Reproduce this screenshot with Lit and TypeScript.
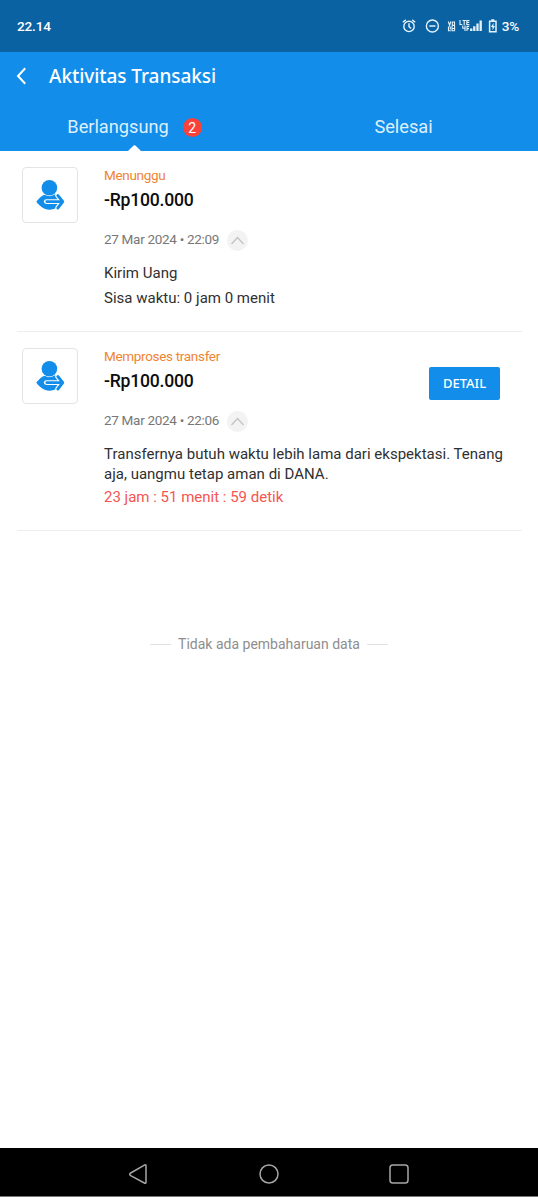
import { LitElement, html, css, svg, nothing } from "lit";
import { customElement, property } from "lit/decorators.js";

@customElement("status-bar")
class StatusBar extends LitElement {
  static styles = css`
    :host { display: flex; height: 52px; background: #0b62a3; color: #fff; position: relative;
      font: 500 13.6px/53px Roboto, sans-serif; padding: 0 19px 0 17px; justify-content: space-between; }
    .time { letter-spacing: -0.2px; }
    .right { display: flex; align-items: center; }
    svg { display: block; }
    .level { margin-left: 3px; letter-spacing: -0.3px; }
  `;
  render() {
    return html`
      <span class="time">22.14</span>
      <div class="right">
        <svg width="97" height="20" viewBox="402 16 97 20" fill="none" stroke="#e4f2fb" stroke-width="1.4">
          <circle cx="409" cy="26.4" r="5.2" />
          <path d="M409 23.2v3.5l2.2 1.7M402.8 22.3l3-2.4M415.2 22.3l-3-2.4" />
          <circle cx="432.4" cy="26" r="6" />
          <path d="M429.3 26h6.2" stroke-width="1.5" />
          <g stroke-width="1.1">
            <path d="M448.3 21.5l1.3 4 1.2-4M452.3 22h2.2v3.4h-2.2zM448.5 26.5v4.3h2.3M452 26v4.8h2.8M452 28.5h2.4M450.3 26.5v3M454.6 26v4.8" />
            <path d="M460 20v4.5h2.2M462.5 20.5h3.4M464.2 20.5v4.5M469.4 20.5h-2.6v4h2.6M466.8 22.4h2.4M462.8 25.5v2.7h2.2M465 25.5v5.500M467 31v-4.600h2.200M467 28.600h2" />
          </g>
          <path d="M471.200 31v-2.600M474.300 31v-4.800M477.500 31v-7.400M480.700 31v-10.400" stroke-width="2.300" />
          <path d="M489.600 21.300h6.400v10.500h-6.400zM491.300 19.900h3" stroke-width="1.500" />
          <path d="M493.700 22.800l-2.800 4.100h1.600v3.400l2.500-4.200h-1.600z" fill="#e4f2fb" stroke="none" />
        </svg>
        <span class="level">3%</span>
      </div>`;
  }
}

@customElement("app-header")
class AppHeader extends LitElement {
  static styles = css`
    :host { display: block; height: 99px; background: #128dea; color: #fff; overflow: hidden; }
    .bar { display: flex; align-items: center; height: 48px; padding-left: 16px; }
    .title { margin-left: 22px; font: 500 19px/48px "Noto Sans", "Open Sans", sans-serif; letter-spacing: -0.06px; }
    .tabs { display: grid; grid-template-columns: 1fr 1fr; grid-template-rows: 51px; height: 51px; font: 400 18.2px/54px Roboto, sans-serif; }
    .tab { display: flex; justify-content: center; align-items: flex-start; position: relative; color: #dff0fd; }
    .badge { width: 19px; height: 19px; border-radius: 50%; background: #f8423a; color: #fff; text-align: center;
      font-size: 14px; line-height: 20px; margin: 18px 0 0 14px; }
    .notch { position: absolute; left: 128px; bottom: 0; display: block; }
  `;
  render() {
    return html`
      <div class="bar">
        <svg width="11" height="18" viewBox="0 0 11 18" fill="none" stroke="#fff" stroke-width="2"><path d="M9.2 1.2L2 9l7.2 7.8" /></svg>
        <span class="title">Aktivitas Transaksi</span>
      </div>
      <div class="tabs">
        <div class="tab"><span>Berlangsung</span><span class="badge">2</span>
          <svg class="notch" width="13" height="6" viewBox="0 0 13 6"><path d="M0 6L5.6.6q.9-.8 1.8 0L13 6z" fill="#fff" /></svg>
        </div>
        <div class="tab">Selesai</div>
      </div>`;
  }
}

interface Transaction {
  status: string;
  amount: string;
  date: string;
  notes: string[];
  countdown?: string;
  action?: string;
}

@customElement("transaction-item")
class TransactionItem extends LitElement {
  @property({ attribute: false }) item!: Transaction;

  static styles = css`
    :host { display: flex; margin: 0 16px 0 17px; padding: 16px 0 0 5px; border-bottom: 1px solid #ededed;
      font-family: Roboto, sans-serif; color: #303030; }
    .icon { box-sizing: border-box; width: 56px; height: 56px; border: 1px solid #e4e4e4; border-radius: 4px; flex: none; }
    .icon svg { display: block; }
    .body { margin-left: 26px; flex: 1; min-width: 0; }
    .top { display: flex; justify-content: space-between; }
    .status { font-size: 13.5px; line-height: 17px; color: #f08432; letter-spacing: -0.32px; }
    .amount { font-size: 17.6px; line-height: 24px; margin-top: 4px; font-weight: 500; color: #0c0c0c; letter-spacing: -0.22px; }
    .meta { display: flex; align-items: center; height: 22px; margin-top: 17px; font-size: 13.5px; line-height: 20px; color: #777; }
    .date { margin-top: -3px; letter-spacing: -0.3px; width: 115px; white-space: nowrap; }
    .meta svg { margin-left: 8px; }
    .notes { font-size: 15px; letter-spacing: 0.01px; margin-top: 12px; }
    .single { line-height: 25px; padding-bottom: 20px; margin-top: 10px; }
    .wrap { line-height: 20px; }
    .countdown { font-size: 15px; line-height: 20px; color: #f5554f; margin: 3px 0 23px; }
    button { width: 71px; height: 33px; margin: 19px 22px 0 0; border: 0; border-radius: 2px; background: #128dea;
      color: #fff; font: 500 13px/33px "Noto Sans", "Open Sans", sans-serif; padding: 0; }
  `;
  render() {
    const t = this.item;
    const single = t.notes.length > 1;
    return html`
      <div class="icon">
        <svg width="54" height="54" viewBox="23 168 54 54">
          <path d="M36.3 201.6c2.8-3.800 5.500-6 9-7.200h12v13.200c-2.300 1.400-4.900 2.100-8 2.100-5.500 0-9.800-3.600-13-8.100z" fill="#128dea" />
          <circle cx="49.400" cy="187.800" r="7.800" fill="#128dea" stroke="#fff" stroke-width="1.200" paint-order="stroke" />
          <g fill="none" stroke="#fff" stroke-linejoin="round">
            <path d="M46.300 201.600h15" stroke-width="4.800" stroke-linecap="round" />
            <path d="M57.600 195.400l5.200 6.200-5.200 6.400" stroke-width="5" stroke-linecap="round" />
          </g>
          <path d="M46.800 201.600h15.500M57.800 195.500l5 6.100-5 6.400" fill="none" stroke="#128dea" stroke-width="2.900" stroke-linecap="round" stroke-linejoin="round" />
        </svg>
      </div>
      <div class="body">
        <div class="top">
          <div>
            <div class="status">${t.status}</div>
            <div class="amount">${t.amount}</div>
            <div class="meta">
              <span class="date">${t.date}</span>
              <svg width="21" height="21" viewBox="0 0 21 21"><circle cx="10.5" cy="10.5" r="10.5" fill="#f3f3f3" /><path d="M4.5 14l6-6.5 6 6.5" fill="none" stroke="#c3c3c3" stroke-width="1.3" /></svg>
            </div>
          </div>
          ${t.action ? html`<button>${t.action}</button>` : nothing}
        </div>
        <div class="notes ${single ? "single" : "wrap"}">${t.notes.map((n) => html`<div>${n}</div>`)}</div>
        ${t.countdown ? html`<div class="countdown">${t.countdown}</div>` : nothing}
      </div>`;
  }
}

@customElement("nav-bar")
class NavBar extends LitElement {
  static styles = css`
    :host { display: flex; justify-content: center; gap: 110px; align-items: center; height: 48px; background: #000;
      border-bottom: 1px solid #777; margin-bottom: 3px; }
    svg { display: block; margin-top: 4px; }
  `;
  render() {
    const icons = [
      svg`<path d="M17 1.600v16.800q0 1.200-1.200.8L1.700 11.600q-2-1.300 0-2.600L15.800.9q1.200-.5 1.200.7z" />`,
      svg`<circle cx="10" cy="10" r="9" />`,
      svg`<rect x="1" y="1" width="18" height="18" rx="2.800" />`,
    ];
    return icons.map((i) => html`<svg width="20" height="20" viewBox="0 0 20 20" fill="none" stroke="#a6a6a6" stroke-width="1.500">${i}</svg>`);
  }
}

@customElement("app-root")
class AppRoot extends LitElement {
  static styles = css`
    :host { display: flex; flex-direction: column; height: 1200px; background: #fff; overflow: hidden; }
    main { flex: 1; }
    .end { display: flex; align-items: center; justify-content: center; gap: 7px; margin-top: 103px;
      font: 400 14px/20px Roboto, sans-serif; color: #8e8e8e; }
    .line { width: 21px; height: 1px; background: #e2e2e2; }
  `;
  private items: Transaction[] = [
    { status: "Menunggu", amount: "-Rp100.000", date: "27 Mar 2024 • 22:09", notes: ["Kirim Uang", "Sisa waktu: 0 jam 0 menit"] },
    {
      status: "Memproses transfer", amount: "-Rp100.000", date: "27 Mar 2024 • 22:06",
      notes: ["Transfernya butuh waktu lebih lama dari ekspektasi. Tenang aja, uangmu tetap aman di DANA."],
      countdown: "23 jam : 51 menit : 59 detik", action: "DETAIL",
    },
  ];
  render() {
    return html`
      <status-bar></status-bar>
      <app-header></app-header>
      <main>
        ${this.items.map((i) => html`<transaction-item .item=${i}></transaction-item>`)}
        <div class="end"><span class="line"></span><span>Tidak ada pembaharuan data</span><span class="line"></span></div>
      </main>
      <nav-bar></nav-bar>`;
  }
}
